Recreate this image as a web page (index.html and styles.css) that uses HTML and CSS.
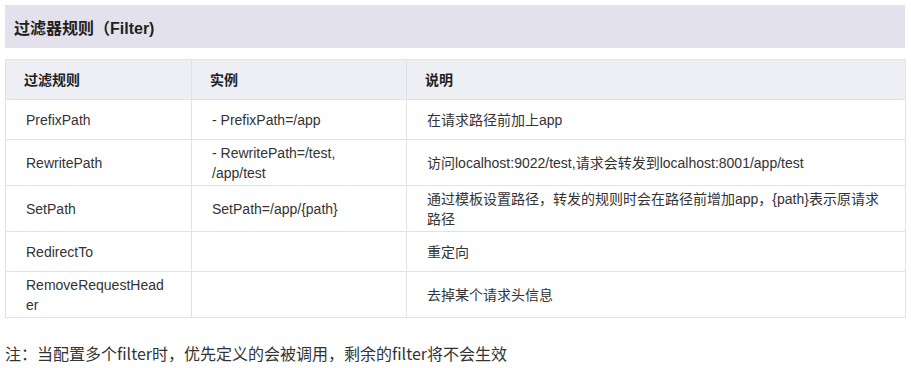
FILE: index.html
```html
<!DOCTYPE html>
<html lang="zh-CN">
<head>
<meta charset="utf-8">
<link rel="stylesheet" href="styles.css">
</head>
<body>
<div class="page">
  <h3 class="title">过滤器规则（Filter)</h3>
  <table class="rules">
    <colgroup>
      <col class="c1"><col class="c2"><col class="c3">
    </colgroup>
    <thead>
      <tr><th>过滤规则</th><th>实例</th><th>说明</th></tr>
    </thead>
    <tbody>
      <tr><td>PrefixPath</td><td>- PrefixPath=/app</td><td>在请求路径前加上app</td></tr>
      <tr><td>RewritePath</td><td>- RewritePath=/test,<br>/app/test</td><td>访问localhost:9022/test,请求会转发到localhost:8001/app/test</td></tr>
      <tr><td>SetPath</td><td>SetPath=/app/{path}</td><td>通过模板设置路径，转发的规则时会在路径前增加app，{path}表示原请求路径</td></tr>
      <tr><td>RedirectTo</td><td></td><td>重定向</td></tr>
      <tr><td class="brk">RemoveRequestHeader</td><td></td><td>去掉某个请求头信息</td></tr>
    </tbody>
  </table>
  <p class="note">注：当配置多个filter时，优先定义的会被调用，剩余的filter将不会生效</p>
</div>
</body>
</html>
```

FILE: styles.css
```css
html, body {
  margin: 0;
  padding: 0;
  background: #ffffff;
}
.page {
  padding: 5px 6px 0 5px;
  font-family: "Liberation Sans", Arial, "Noto Sans CJK SC", sans-serif;
  color: #333333;
}
.title {
  margin: 0;
  height: 43px;
  display: flex;
  align-items: center;
  padding: 0 9px;
  background: #e3e2ec;
  font-size: 16px;
  font-weight: bold;
  color: #1f1f1f;
}
.rules {
  margin-top: 11px;
  width: 900px;
  border-collapse: collapse;
  table-layout: fixed;
  font-size: 14px;
  line-height: 20px;
}
.c1 { width: 186px; }
.c2 { width: 215px; }
.c3 { width: 499px; }
.rules th,
.rules td {
  border: 1px solid #dfe2e8;
  height: 40px;
  box-sizing: border-box;
  padding: 3px 20px 2px;
  text-align: left;
  vertical-align: middle;
}
.rules th {
  background: #eeeff5;
  font-weight: bold;
  color: #1f1f1f;
  padding-left: 18px;
}
.rules td.brk {
  word-break: break-all;
  padding-right: 26px;
}
.note {
  margin: 23px 0 0 0;
  font-family: "Noto Sans CJK SC", sans-serif;
  font-size: 16px;
  line-height: 24px;
  color: #333333;
}
```
